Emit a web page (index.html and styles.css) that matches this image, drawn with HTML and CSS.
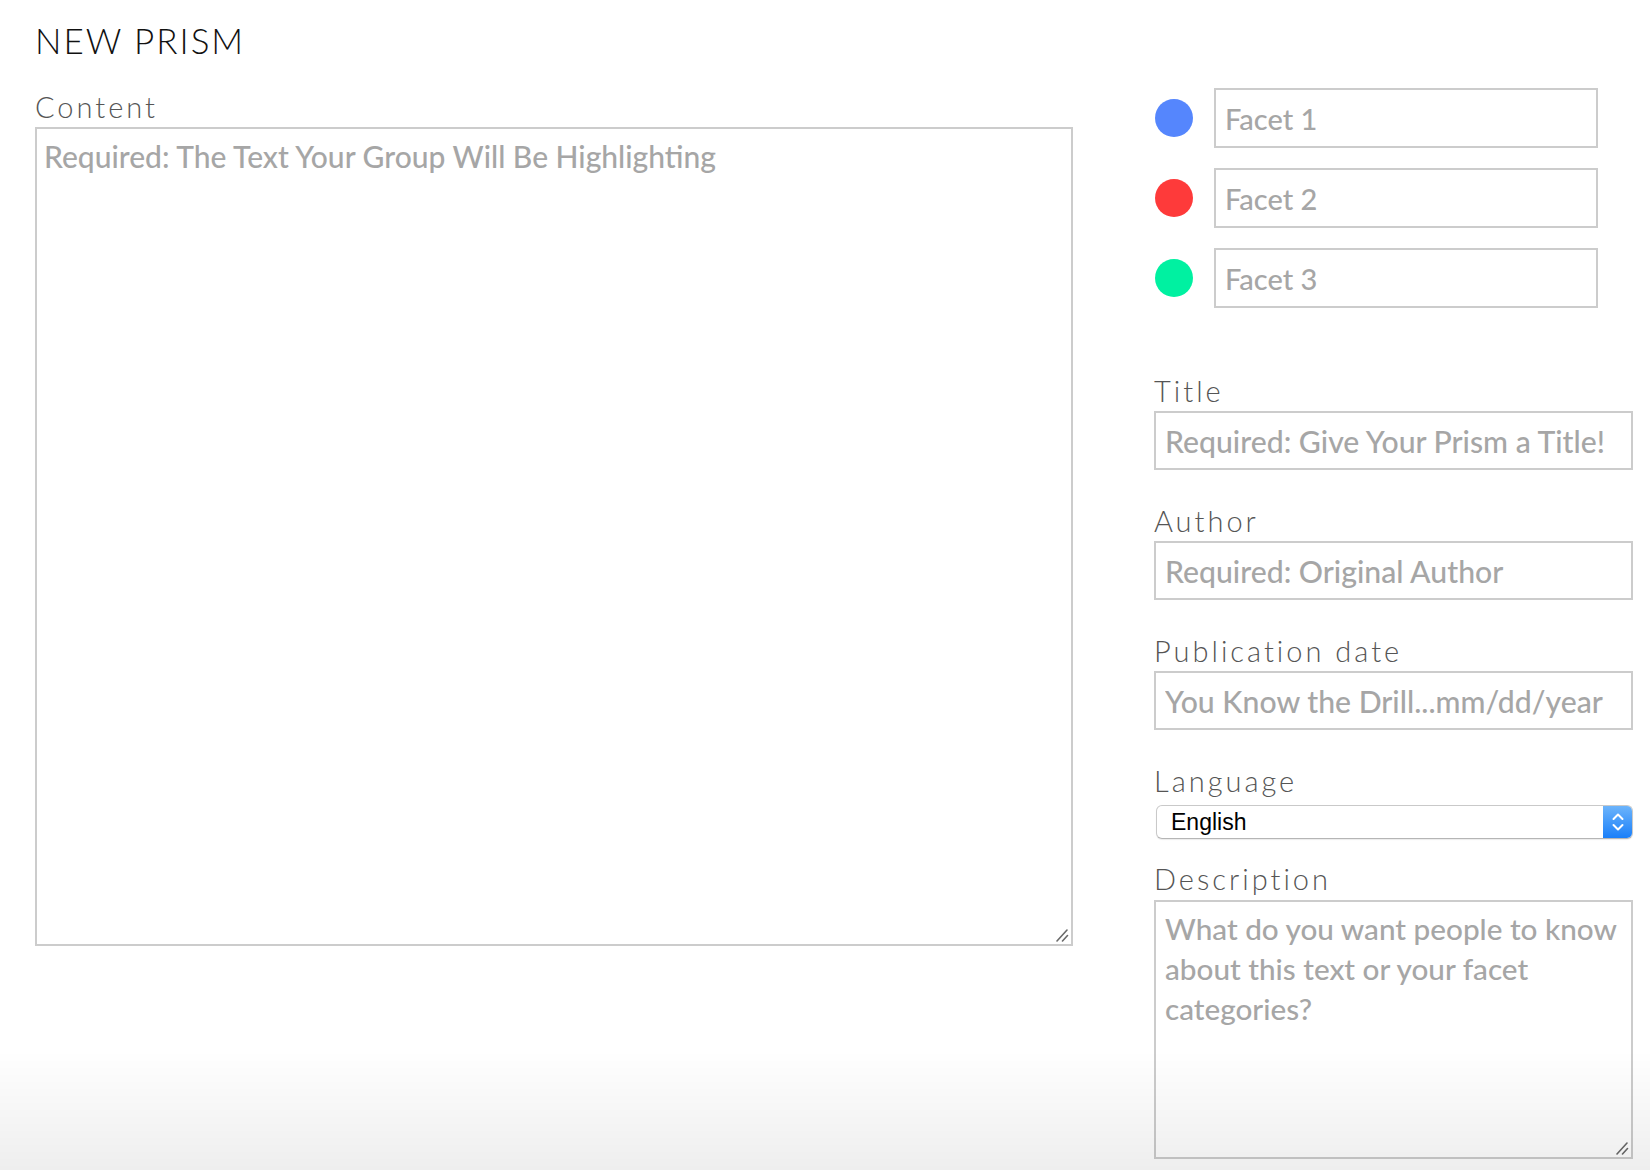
FILE: index.html
```html
<!DOCTYPE html>
<html lang="en">
<head>
<meta charset="utf-8">
<title>New Prism</title>
<link rel="stylesheet" href="styles.css">
</head>
<body>
<div class="page">
  <section class="left">
    <h1 class="heading">NEW PRISM</h1>
    <label class="label" for="content">Content</label>
    <div class="area-wrap">
      <textarea id="content" class="content-box" placeholder="Required: The Text Your Group Will Be Highlighting"></textarea>
      <svg class="grip" width="14" height="14" viewBox="0 0 14 14" fill="none" stroke="#6a6a6a" stroke-width="1.6" stroke-linecap="round">
        <path d="M2 13 L12 2"/>
        <path d="M7.5 13 L12.5 7.5"/>
      </svg>
    </div>
  </section>
  <section class="right">
    <div class="facets">
      <div class="facet-row">
        <span class="dot dot-blue"></span>
        <input class="facet-input" type="text" placeholder="Facet 1">
      </div>
      <div class="facet-row">
        <span class="dot dot-red"></span>
        <input class="facet-input" type="text" placeholder="Facet 2">
      </div>
      <div class="facet-row">
        <span class="dot dot-green"></span>
        <input class="facet-input" type="text" placeholder="Facet 3">
      </div>
    </div>
    <div class="field field-first">
      <label class="label" for="title">Title</label>
      <input id="title" class="text-input" type="text" placeholder="Required: Give Your Prism a Title!">
    </div>
    <div class="field">
      <label class="label" for="author">Author</label>
      <input id="author" class="text-input" type="text" placeholder="Required: Original Author">
    </div>
    <div class="field">
      <label class="label" for="date">Publication date</label>
      <input id="date" class="text-input" type="text" placeholder="You Know the Drill...mm/dd/year">
    </div>
    <div class="field">
      <label class="label label-lang">Language</label>
      <div class="select">
        <span class="select-text">English</span>
        <span class="select-btn">
          <svg width="14" height="22" viewBox="0 0 14 22" fill="none" stroke="#fff" stroke-width="2" stroke-linecap="round" stroke-linejoin="round">
            <path d="M2.5 8 L7 3.5 L11.5 8"/>
            <path d="M2.5 14 L7 18.5 L11.5 14"/>
          </svg>
        </span>
      </div>
    </div>
    <div class="field field-desc">
      <label class="label label-desc" for="desc">Description</label>
      <div class="area-wrap">
        <textarea id="desc" class="desc-box" placeholder="What do you want people to know&#10;about this text or your facet&#10;categories?"></textarea>
        <svg class="grip" width="14" height="14" viewBox="0 0 14 14" fill="none" stroke="#6a6a6a" stroke-width="1.6" stroke-linecap="round">
          <path d="M2 13 L12 2"/>
          <path d="M7.5 13 L12.5 7.5"/>
        </svg>
      </div>
    </div>
  </section>
</div>
<div class="fade"></div>
</body>
</html>
```

FILE: styles.css
```css
html, body {
  margin: 0;
  padding: 0;
  background: #ffffff;
}

body {
  font-family: "Lato", "Liberation Sans", sans-serif;
}

.page {
  display: flex;
  gap: 81px;
  padding: 0 17px 0 35px;
}

.left {
  width: 1038px;
  display: flex;
  flex-direction: column;
}

.heading {
  margin: 20px 0 0 0;
  font-weight: 300;
  font-size: 35px;
  line-height: 40px;
  letter-spacing: 2px;
  color: #111;
  height: 40px;
}

.label {
  display: block;
  font-family: "Lato", sans-serif;
  font-weight: 300;
  font-size: 29px;
  line-height: 30px;
  height: 30px;
  letter-spacing: 3px;
  color: #555555;
}

.left .label {
  margin-top: 32px;
  margin-bottom: 5px;
}

textarea, input {
  font-family: "Lato", "Liberation Sans", sans-serif;
  font-weight: 500;
  box-sizing: border-box;
  border: 2px solid #cccccc;
  border-radius: 0;
  outline: none;
  background: #fff;
  margin: 0;
  display: block;
}

::placeholder {
  color: #a6a6a6;
  opacity: 1;
}

.area-wrap {
  position: relative;
}

.grip {
  position: absolute;
  right: 4px;
  bottom: 4px;
  pointer-events: none;
}

.content-box {
  width: 1038px;
  height: 819px;
  padding: 10px 8px 0 7px;
  font-size: 30px;
  line-height: 34px;
  resize: none;
}

.right {
  width: 479px;
  padding-top: 88px;
  display: flex;
  flex-direction: column;
}

.facets {
  display: flex;
  flex-direction: column;
  gap: 20px;
}

.facet-row {
  display: flex;
  align-items: center;
  gap: 21px;
  padding-left: 1px;
}

.dot {
  width: 38px;
  height: 38px;
  border-radius: 50%;
  flex: none;
}

.dot-blue { background: #5586fd; }
.dot-red { background: #fe3a3a; }
.dot-green { background: #00f1a1; }

.facet-input {
  width: 384px;
  height: 60px;
  padding: 0 9px;
  font-size: 29px;
}

.field {
  display: flex;
  flex-direction: column;
  margin-top: 36px;
}

.field-first {
  margin-top: 68px;
}

.field .label {
  margin-bottom: 5px;
}

.text-input {
  width: 479px;
  height: 59px;
  padding: 0 9px;
  font-size: 30.2px;
}

.field .label-lang {
  margin-bottom: 9px;
}

.select {
  box-sizing: border-box;
  width: 477px;
  height: 34px;
  margin-left: 2px;
  display: flex;
  align-items: center;
  justify-content: space-between;
  border: 1px solid #c9c9c9;
  border-bottom-color: #b5b5b5;
  border-radius: 6px;
  background: #fff;
  box-shadow: 0 1px 1px rgba(0, 0, 0, 0.08);
  overflow: hidden;
}

.select-text {
  font-family: "Liberation Sans", Arial, sans-serif;
  font-size: 23px;
  color: #000;
  padding-left: 14px;
}

.select-btn {
  width: 29px;
  height: 100%;
  display: flex;
  align-items: center;
  justify-content: center;
  background: linear-gradient(#6cb4fb, #1a7ff9);
}

.field-desc {
  margin-top: 25px;
}

.field .label-desc {
  margin-bottom: 6px;
}

.desc-box {
  width: 479px;
  height: 259px;
  padding: 7px 8px 0 9px;
  font-size: 29.7px;
  line-height: 40px;
  resize: none;
}

.fade {
  position: fixed;
  left: 0;
  right: 0;
  bottom: 0;
  height: 120px;
  pointer-events: none;
  background: linear-gradient(rgba(0, 0, 0, 0), rgba(0, 0, 0, 0.065));
}
```
